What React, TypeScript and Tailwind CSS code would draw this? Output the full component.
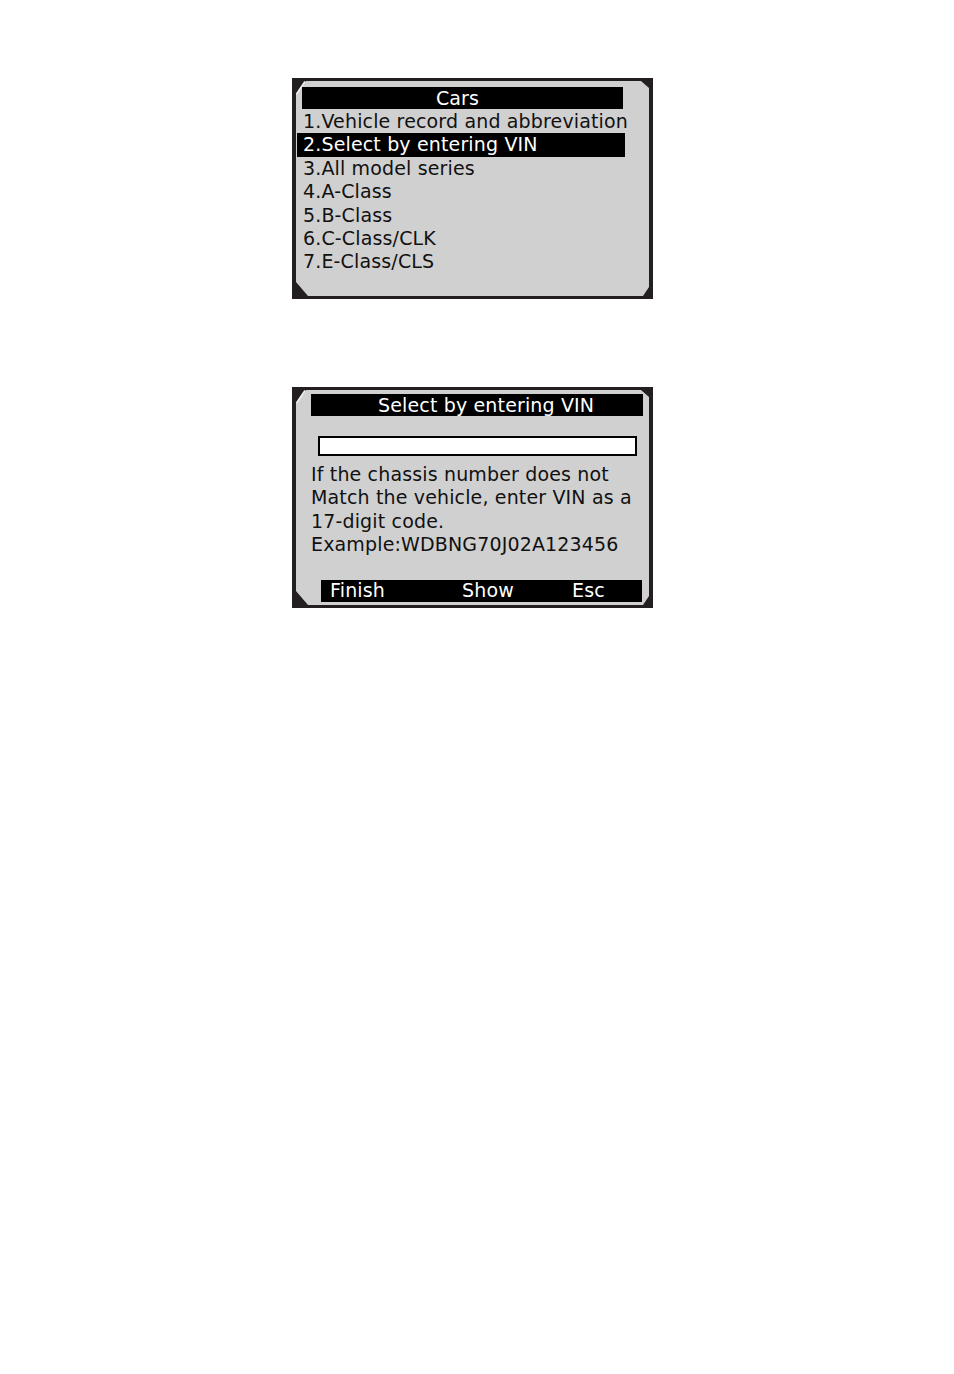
import React from 'react';

const font = { fontFamily: '"DejaVu Sans", Verdana, sans-serif' };

const Frame: React.FC<{ children: React.ReactNode; height: string }> = ({ children, height }) => (
  <div className={`relative w-[361px] ${height} bg-[#231f20] px-[4px] py-[3px]`}>
    <div className="relative h-full w-full bg-[#d0d0d0] [clip-path:polygon(10px_0,calc(100%_-_8px)_0,100%_7px,100%_calc(100%_-_9px),calc(100%_-_6px)_100%,12px_100%,0_calc(100%_-_14px),0_13px)]">
      {children}
    </div>
    <svg className="absolute left-0 top-0" width="16" height="20" viewBox="0 0 16 20">
      <line x1="4.5" y1="16" x2="13" y2="3.5" stroke="#f2f2f2" strokeWidth="1.6" />
    </svg>
  </div>
);

const menu = [
  '1.Vehicle record and abbreviation',
  '2.Select by entering VIN',
  '3.All model series',
  '4.A-Class',
  '5.B-Class',
  '6.C-Class/CLK',
  '7.E-Class/CLS',
];

export default function App() {
  return (
    <div className="min-h-[1374px] w-full bg-white pl-[292px] pt-[78px] text-[19px] tracking-[0.15px] text-[#111]" style={font}>
      <div className="flex flex-col gap-[88px]">
        <Frame height="h-[221px]">
          <div className="pt-[6px]">
            <div className="ml-[6px] flex h-[22px] w-[321px] items-center justify-center bg-black pr-[10px] leading-none text-white">
              Cars
            </div>
            <ul className="mt-[1px]">
              {menu.map((m, i) => (
                <li
                  key={m}
                  className={`h-[23.4px] leading-[23.4px] whitespace-nowrap ${
                    i === 1 ? 'ml-[1px] w-[328px] bg-black pl-[6px] text-white' : 'pl-[7px]'
                  }`}
                >
                  {m}
                </li>
              ))}
            </ul>
          </div>
        </Frame>

        <Frame height="h-[221px]">
          <div className="flex h-full flex-col pt-[4px]">
            <div className="ml-[15px] flex h-[22px] w-[332px] items-center bg-black pl-[67px] leading-none text-white">
              Select by entering VIN
            </div>
            <div className="ml-[22px] mt-[20px] h-[20px] w-[319px] border-2 border-black bg-white" />
            <div className="ml-[15px] mt-[7px] leading-[23.4px]">
              <p>If the chassis number does not</p>
              <p className="whitespace-nowrap">Match the vehicle, enter VIN as a</p>
              <p>17-digit code.</p>
              <p>Example:WDBNG70J02A123456</p>
            </div>
            <div className="ml-[25px] mt-[23px] flex h-[22px] w-[321px] items-center bg-black leading-none text-white">
              <span className="ml-[9px] w-[132px]">Finish</span>
              <span className="w-[110px]">Show</span>
              <span>Esc</span>
            </div>
          </div>
        </Frame>
      </div>
    </div>
  );
}
